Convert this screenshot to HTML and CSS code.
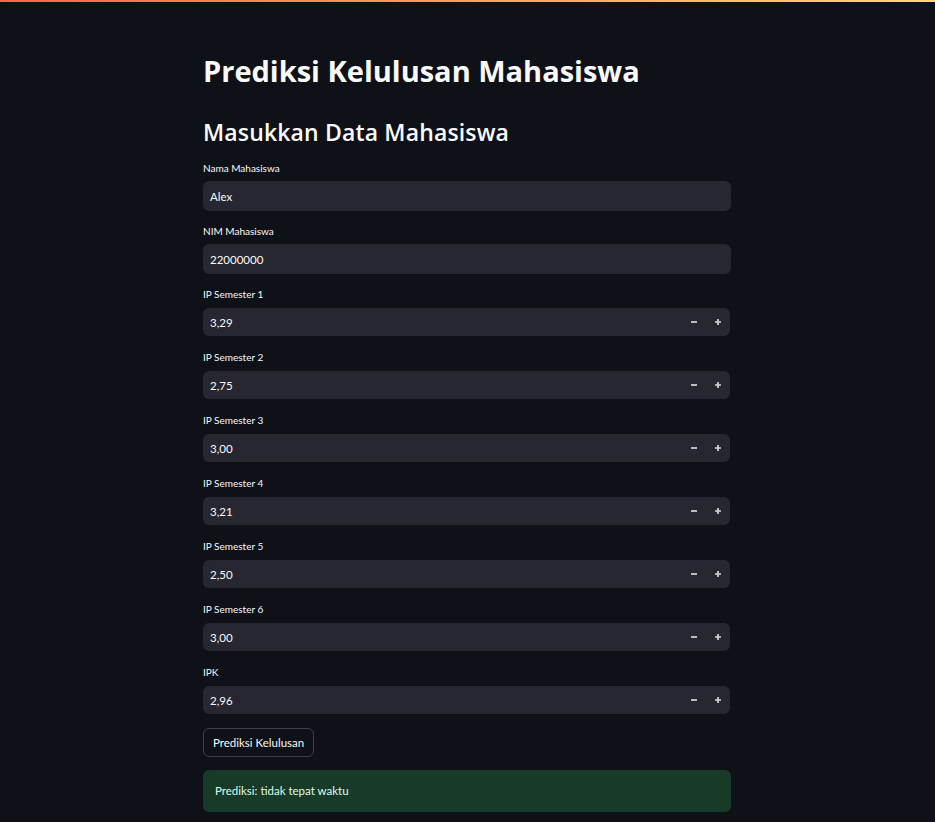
FILE: index.html
```html
<!DOCTYPE html>
<html lang="id">
<head>
<meta charset="utf-8">
<title>Prediksi Kelulusan Mahasiswa</title>
<link rel="stylesheet" href="styles.css">
</head>
<body>
<div class="decoration"></div>
<div class="page">
<main class="container">
  <h1 class="title">Prediksi Kelulusan Mahasiswa</h1>
  <h2 class="subtitle">Masukkan Data Mahasiswa</h2>
  <div class="form">
    <div class="field">
      <label class="label">Nama Mahasiswa</label>
      <div class="text-input">Alex</div>
    </div>
    <div class="field">
      <label class="label">NIM Mahasiswa</label>
      <div class="text-input">22000000</div>
    </div>
    <div class="field num">
      <label class="label">IP Semester 1</label>
      <div class="num-input"><span class="value">3,29</span><span class="step"><svg width="6" height="6" viewBox="0 0 6 6"><path d="M0 3h6" stroke="currentColor" stroke-width="1.7"/></svg></span><span class="step"><svg width="6" height="6" viewBox="0 0 6 6"><path d="M0 3h6M3 0v6" stroke="currentColor" stroke-width="1.7"/></svg></span></div>
    </div>
    <div class="field num">
      <label class="label">IP Semester 2</label>
      <div class="num-input"><span class="value">2,75</span><span class="step"><svg width="6" height="6" viewBox="0 0 6 6"><path d="M0 3h6" stroke="currentColor" stroke-width="1.7"/></svg></span><span class="step"><svg width="6" height="6" viewBox="0 0 6 6"><path d="M0 3h6M3 0v6" stroke="currentColor" stroke-width="1.7"/></svg></span></div>
    </div>
    <div class="field num">
      <label class="label">IP Semester 3</label>
      <div class="num-input"><span class="value">3,00</span><span class="step"><svg width="6" height="6" viewBox="0 0 6 6"><path d="M0 3h6" stroke="currentColor" stroke-width="1.7"/></svg></span><span class="step"><svg width="6" height="6" viewBox="0 0 6 6"><path d="M0 3h6M3 0v6" stroke="currentColor" stroke-width="1.7"/></svg></span></div>
    </div>
    <div class="field num">
      <label class="label">IP Semester 4</label>
      <div class="num-input"><span class="value">3,21</span><span class="step"><svg width="6" height="6" viewBox="0 0 6 6"><path d="M0 3h6" stroke="currentColor" stroke-width="1.7"/></svg></span><span class="step"><svg width="6" height="6" viewBox="0 0 6 6"><path d="M0 3h6M3 0v6" stroke="currentColor" stroke-width="1.7"/></svg></span></div>
    </div>
    <div class="field num">
      <label class="label">IP Semester 5</label>
      <div class="num-input"><span class="value">2,50</span><span class="step"><svg width="6" height="6" viewBox="0 0 6 6"><path d="M0 3h6" stroke="currentColor" stroke-width="1.7"/></svg></span><span class="step"><svg width="6" height="6" viewBox="0 0 6 6"><path d="M0 3h6M3 0v6" stroke="currentColor" stroke-width="1.7"/></svg></span></div>
    </div>
    <div class="field num">
      <label class="label">IP Semester 6</label>
      <div class="num-input"><span class="value">3,00</span><span class="step"><svg width="6" height="6" viewBox="0 0 6 6"><path d="M0 3h6" stroke="currentColor" stroke-width="1.7"/></svg></span><span class="step"><svg width="6" height="6" viewBox="0 0 6 6"><path d="M0 3h6M3 0v6" stroke="currentColor" stroke-width="1.7"/></svg></span></div>
    </div>
    <div class="field num">
      <label class="label">IPK</label>
      <div class="num-input"><span class="value">2,96</span><span class="step"><svg width="6" height="6" viewBox="0 0 6 6"><path d="M0 3h6" stroke="currentColor" stroke-width="1.7"/></svg></span><span class="step"><svg width="6" height="6" viewBox="0 0 6 6"><path d="M0 3h6M3 0v6" stroke="currentColor" stroke-width="1.7"/></svg></span></div>
    </div>
    <div class="actions">
      <button class="button" type="button">Prediksi Kelulusan</button>
    </div>
    <div class="alert">Prediksi: tidak tepat waktu</div>
  </div>
</main>
</div>
</body>
</html>
```
FILE: styles.css
```css
* { box-sizing: border-box; }

html, body {
  margin: 0;
  padding: 0;
  background: #0e1117;
  color: #fafafa;
  font-family: Lato, "Noto Sans", sans-serif;
}

.decoration {
  height: 2px;
  background: linear-gradient(90deg, #ff6446, #ffd870);
}

.page {
  padding-right: 1px;
}

.container {
  width: 528px;
  margin: 0 auto;
  padding-top: 52px;
}

.title {
  margin: 0 0 30px;
  font-family: "Open Sans", Lato, sans-serif;
  font-size: 29px;
  line-height: 1.2;
  font-weight: 700;
}

.subtitle {
  margin: 0 0 15px;
  font-family: "Open Sans", Lato, sans-serif;
  font-size: 23px;
  line-height: 1.2;
  font-weight: 600;
  letter-spacing: 0.15px;
}

.form {
  display: flex;
  flex-direction: column;
  gap: 13px;
}

.field {
  display: flex;
  flex-direction: column;
}

.field.num {
  padding-bottom: 1px;
}

.label {
  display: block;
  font-size: 10px;
  line-height: 14px;
  margin-bottom: 6px;
}

.field.num .label {
  margin-bottom: 7px;
}

.text-input {
  height: 30px;
  background: #262730;
  border-radius: 6px;
  padding: 0 7px;
  display: flex;
  align-items: center;
  font-size: 11.5px;
}

.num-input {
  height: 28px;
  margin-right: 1px;
  background: #262730;
  border-radius: 6px;
  padding-left: 7px;
  display: flex;
  align-items: center;
  font-size: 11.5px;
}

.num-input .value {
  flex: 1;
}

.step {
  width: 24px;
  height: 100%;
  display: flex;
  align-items: center;
  justify-content: center;
  color: #d6d6d9;
}

.step svg {
  display: block;
}

.actions {
  display: flex;
}

.button {
  height: 29px;
  padding: 0 9px;
  background: transparent;
  color: #fafafa;
  border: 1px solid rgba(250, 250, 250, 0.2);
  border-radius: 6px;
  font-family: inherit;
  font-size: 11.5px;
}

.alert {
  background: #183a29;
  color: #dffde9;
  border-radius: 6px;
  padding: 12px;
  font-size: 11.5px;
  line-height: 18px;
}
```
